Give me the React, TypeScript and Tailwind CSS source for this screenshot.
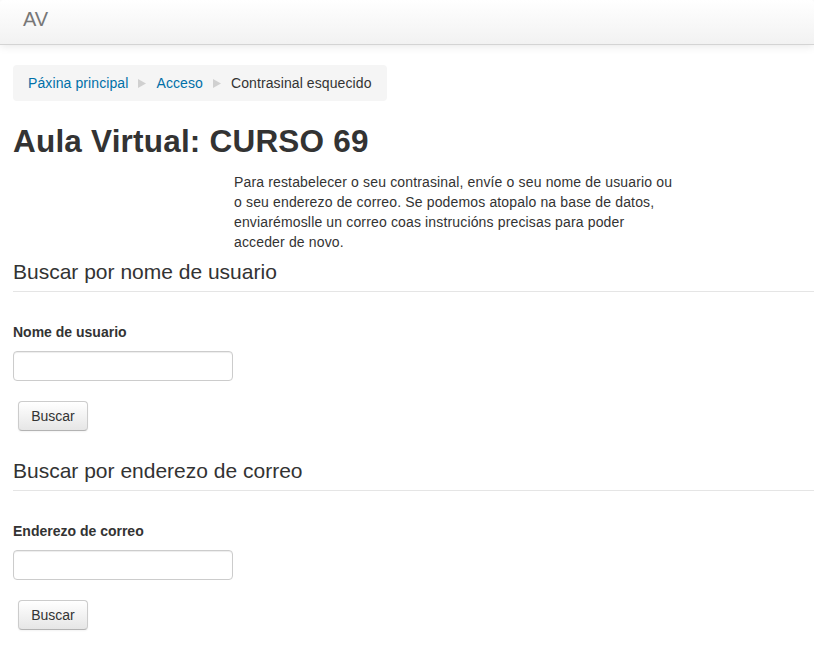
import React from 'react';

const font = { fontFamily: '"Liberation Sans", Arial, Helvetica, sans-serif' };

function Divider() {
  return (
    <svg width="8" height="9" viewBox="0 0 8 9" className="mx-[10px] shrink-0">
      <polygon points="0,0 8,4.5 0,9" fill="#d0d0d0" />
    </svg>
  );
}

function SearchFieldset({ legend, label }: { legend: string; label: string }) {
  return (
    <fieldset>
      <div className="h-[40px] leading-[40px] text-[21px] text-[#333] border-b border-[#e5e5e5]">
        {legend}
      </div>
      <div className="mt-[30px] leading-[20px] text-[14px] font-bold text-[#333]">{label}</div>
      <input
        type="text"
        className="mt-[9px] block w-[220px] h-[30px] bg-white border border-[#ccc] rounded-[4px] shadow-[inset_0_1px_1px_rgba(0,0,0,0.075)] px-[6px] text-[14px]"
      />
      <button className="mt-[20px] ml-[5px] block h-[30px] w-[70px] text-[14px] text-[#333] rounded-[4px] border border-[#ccc] border-b-[#b3b3b3] bg-gradient-to-b from-white to-[#e6e6e6] shadow-[inset_0_1px_0_rgba(255,255,255,0.2),0_1px_2px_rgba(0,0,0,0.05)]">
        Buscar
      </button>
    </fieldset>
  );
}

export default function App() {
  return (
    <div className="min-h-[657px] bg-white text-[#333] text-[14px]" style={font}>
      <div className="h-[45px] rounded-t-[4px] bg-gradient-to-b from-white to-[#f2f2f2] border-b border-[#d4d4d4] shadow-[0_1px_10px_rgba(0,0,0,0.1)] flex items-center pl-[23px]">
        <span className="text-[20px] text-[#777] leading-[20px] -mt-[7px]">AV</span>
      </div>

      <div className="pl-[13px] pt-[20px]">
        <div className="inline-flex items-center h-[36px] pl-[15px] pr-[15px] bg-[#f5f5f5] rounded-[4px] leading-[20px] tracking-[0.1px]">
          <a className="text-[#0070a8]">Páxina principal</a>
          <Divider />
          <a className="text-[#0070a8]">Acceso</a>
          <Divider />
          <span className="text-[#333]">Contrasinal esquecido</span>
        </div>

        <h1 className="mt-[20px] text-[31.5px] leading-[40px] font-bold text-[#333] tracking-[0.2px]">
          Aula Virtual: CURSO 69
        </h1>

        <div className="mt-[11px] ml-[221px] w-[442px] leading-[20px] tracking-[0.15px]">
          Para restabelecer o seu contrasinal, envíe o seu nome de usuario ou o seu enderezo de
          correo. Se podemos atopalo na base de datos, enviarémoslle un correo coas instrucións
          precisas para poder acceder de novo.
        </div>

        <SearchFieldset legend="Buscar por nome de usuario" label="Nome de usuario" />
        <div className="h-[20px]" />
        <SearchFieldset legend="Buscar por enderezo de correo" label="Enderezo de correo" />
      </div>
    </div>
  );
}
